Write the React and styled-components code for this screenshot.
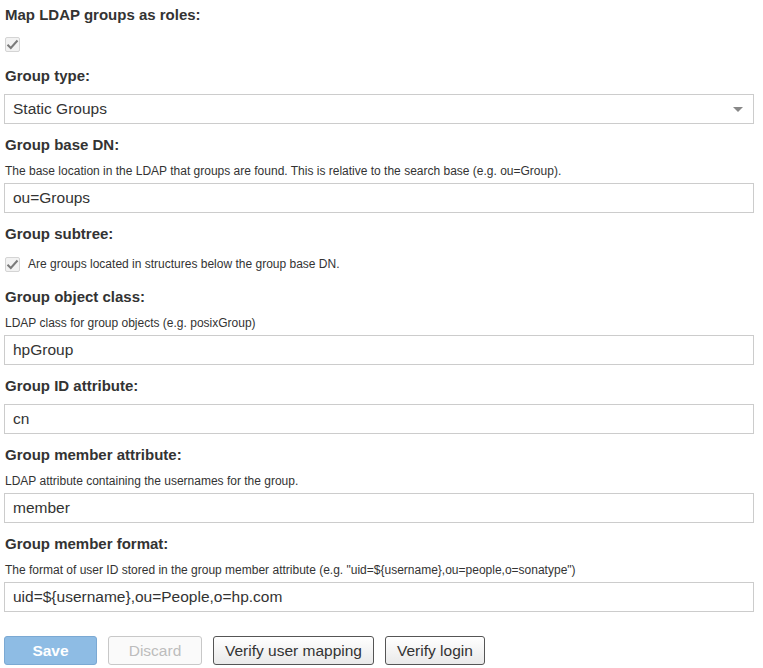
import styled, { createGlobalStyle } from "styled-components";

const GlobalStyle = createGlobalStyle`
  body {
    margin: 0;
    background: #fff;
    font-family: "Liberation Sans", Arial, sans-serif;
    color: #333;
  }
`;

const Form = styled.form`
  width: 750px;
  padding: 5px 0 0 4px;
`;

const Field = styled.div`
  margin-bottom: 11px;
`;

const Label = styled.div`
  font-size: 15px;
  font-weight: 700;
  line-height: 20px;
  padding-left: 1px;
  margin-bottom: 8px;
  color: #333;
`;

const Help = styled.div`
  font-size: 12px;
  line-height: 16px;
  padding-left: 1px;
  margin: 2px 0 4px;
  color: #333;
`;

const TextInput = styled.div`
  box-sizing: border-box;
  height: 30px;
  width: 750px;
  border: 1px solid #ccc;
  background: #fff;
  padding: 0 8px;
  font-size: 15.5px;
  line-height: 28px;
  color: #333;
`;

const SelectBox = styled(TextInput)`
  display: flex;
  align-items: center;
  justify-content: space-between;
`;

const Caret = styled.span`
  width: 0;
  height: 0;
  border-left: 5px solid transparent;
  border-right: 5px solid transparent;
  border-top: 5px solid #888;
  margin-right: 2px;
`;

const CheckRow = styled.div`
  display: flex;
  align-items: center;
  gap: 8px;
  height: ${(p) => p.$height || 24}px;
  padding-left: 1px;
  margin-top: ${(p) => p.$top || 0}px;
  font-size: 12px;
  color: #333;
`;

const Box = styled.span`
  box-sizing: border-box;
  width: 15px;
  height: 15px;
  border: 1px solid #d4d4d4;
  border-radius: 2px;
  background: #f2f2f2;
  display: flex;
  align-items: center;
  justify-content: center;
`;

const Buttons = styled.div`
  display: flex;
  gap: 11px;
  margin-top: 24px;
`;

const Button = styled.button`
  box-sizing: border-box;
  height: 29px;
  min-width: ${(p) => p.$min || 0}px;
  padding: 0 11px;
  font-family: "Liberation Sans", Arial, sans-serif;
  font-size: 15.5px;
  border-radius: 3px;
  border: 1px solid #555;
  color: #333;
  background: linear-gradient(#ffffff, #e9e9e9);
`;

const SaveButton = styled(Button)`
  background: #8ebce4;
  border-color: #7ba9d3;
  color: #fff;
  font-weight: 700;
`;

const DiscardButton = styled(Button)`
  background: #fafafa;
  border-color: #c8c8c8;
  color: #bdbdbd;
`;

const Check = () => (
  <Box>
    <svg width="13" height="11" viewBox="0 0 13 11">
      <path d="M1.5 5.8 L4.8 9 L11.5 1.5" fill="none" stroke="#7a7a7a" strokeWidth="2" />
    </svg>
  </Box>
);

const App = () => {
  return (
    <>
      <GlobalStyle />
      <Form>
        <Field>
          <Label>Map LDAP groups as roles:</Label>
          <CheckRow $top={2} $height={22}>
            <Check />
          </CheckRow>
        </Field>
        <Field>
          <Label>Group type:</Label>
          <SelectBox>
            Static Groups
            <Caret />
          </SelectBox>
        </Field>
        <Field>
          <Label>Group base DN:</Label>
          <Help>
            The base location in the LDAP that groups are found. This is relative to the search base (e.g. ou=Group).
          </Help>
          <TextInput>ou=Groups</TextInput>
        </Field>
        <Field>
          <Label>Group subtree:</Label>
          <CheckRow $top={7}>
            <Check />
            Are groups located in structures below the group base DN.
          </CheckRow>
        </Field>
        <Field>
          <Label>Group object class:</Label>
          <Help>LDAP class for group objects (e.g. posixGroup)</Help>
          <TextInput>hpGroup</TextInput>
        </Field>
        <Field>
          <Label>Group ID attribute:</Label>
          <TextInput>cn</TextInput>
        </Field>
        <Field>
          <Label>Group member attribute:</Label>
          <Help>LDAP attribute containing the usernames for the group.</Help>
          <TextInput>member</TextInput>
        </Field>
        <Field>
          <Label>Group member format:</Label>
          <Help>
            The format of user ID stored in the group member attribute (e.g. "uid=${"{"}username{"}"},ou=people,o=sonatype")
          </Help>
          <TextInput>uid=${"{"}username{"}"},ou=People,o=hp.com</TextInput>
        </Field>
        <Buttons>
          <SaveButton type="button" $min={93}>Save</SaveButton>
          <DiscardButton type="button" $min={94}>Discard</DiscardButton>
          <Button type="button">Verify user mapping</Button>
          <Button type="button">Verify login</Button>
        </Buttons>
      </Form>
    </>
  );
};

export default App;
